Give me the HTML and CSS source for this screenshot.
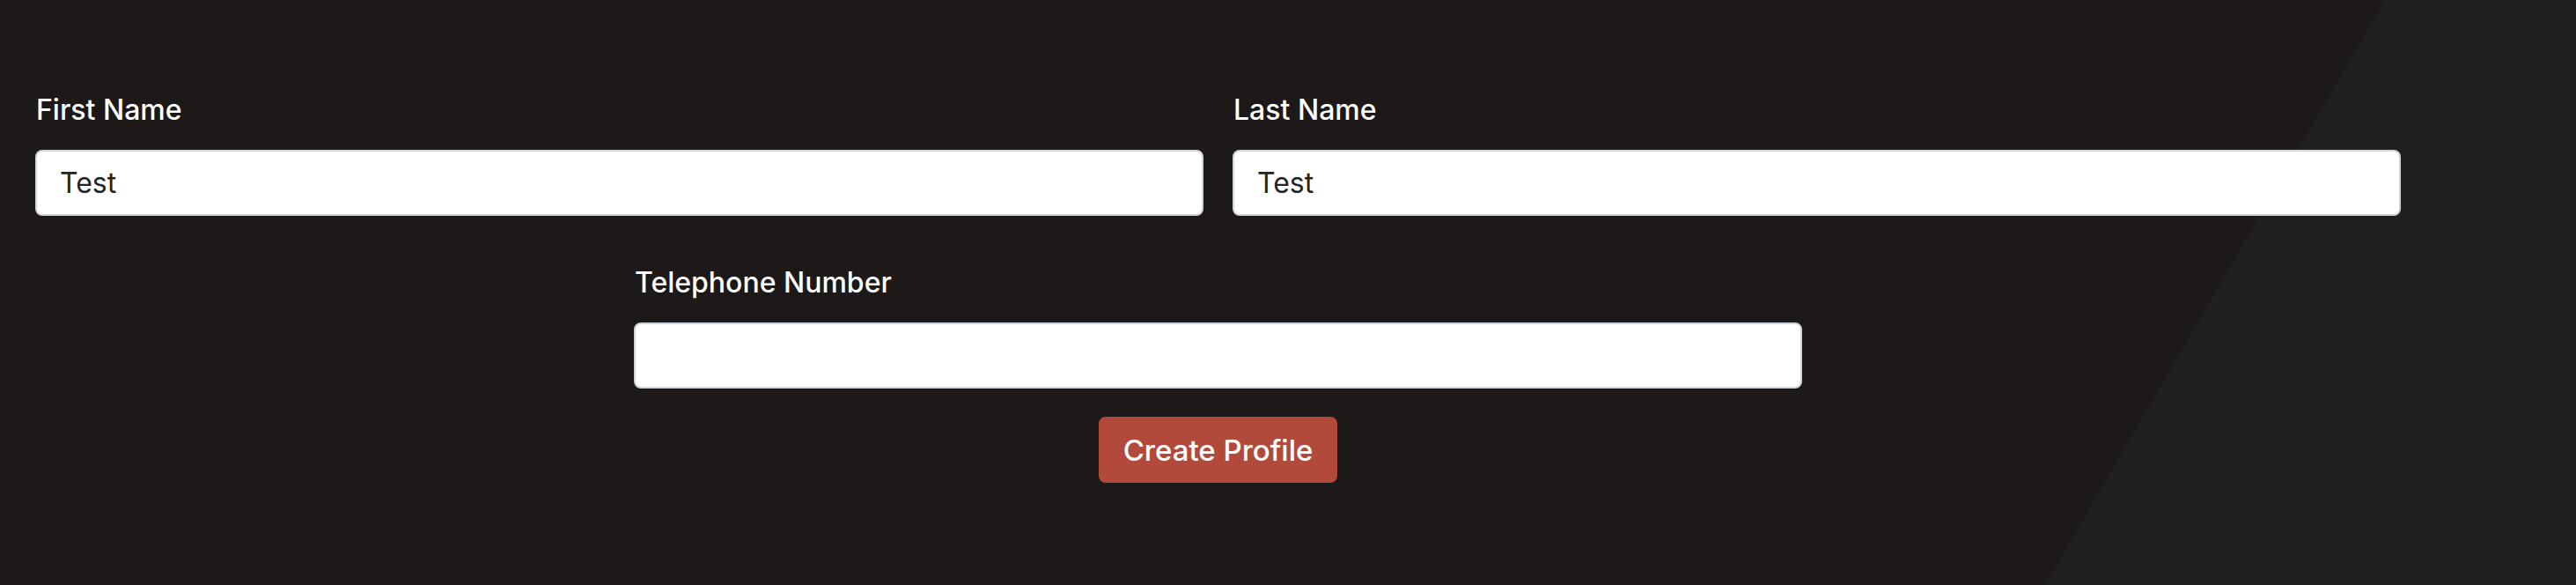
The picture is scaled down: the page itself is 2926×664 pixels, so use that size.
FILE: index.html
```html
<!DOCTYPE html>
<html lang="en">
<head>
<meta charset="utf-8">
<title>Create Profile</title>
<link rel="stylesheet" href="styles.css">
</head>
<body>
<form class="profile-form">
  <div class="row-two">
    <div class="field">
      <label class="field-label" for="first">First Name</label>
      <input class="field-input" id="first" type="text" value="Test">
    </div>
    <div class="field">
      <label class="field-label" for="last">Last Name</label>
      <input class="field-input" id="last" type="text" value="Test">
    </div>
  </div>
  <div class="row-one">
    <div class="field field-center">
      <label class="field-label" for="tel">Telephone Number</label>
      <input class="field-input" id="tel" type="tel" value="">
    </div>
  </div>
  <div class="row-actions">
    <button class="btn-create" type="button">Create Profile</button>
  </div>
</form>
</body>
</html>
```
FILE: styles.css
```css
html {
  background: #1c1918;
}
body {
  margin: 0;
  height: 664px;
  position: relative;
  font-family: Inter, "Noto Sans", sans-serif;
  color: #ffffff;
  overflow: hidden;
}
body::before {
  content: "";
  position: absolute;
  inset: 0;
  background: #202020;
  clip-path: polygon(2709px 0, 100% 0, 100% 100%, 2323px 100%);
  z-index: -1;
}
.profile-form {
  width: 2687px;
  padding: 105px 0 0 40px;
  display: flex;
  flex-direction: column;
}
.row-two {
  display: grid;
  grid-template-columns: 1327px 1327px;
  column-gap: 33px;
}
.row-one {
  display: flex;
  justify-content: center;
  margin-top: 56px;
}
.field {
  display: flex;
  flex-direction: column;
}
.field-center {
  width: 1327px;
}
.field-label {
  font-size: 32px;
  line-height: 40px;
  font-weight: 500;
  margin-bottom: 25px;
  padding-left: 1px;
}
.field-input {
  box-sizing: border-box;
  height: 75px;
  width: 100%;
  border: 2px solid #ced4da;
  border-radius: 8px;
  background: #ffffff;
  padding: 0 26px;
  font-family: Inter, "Noto Sans", sans-serif;
  font-size: 32px;
  color: #212529;
  outline: none;
}
.row-actions {
  display: flex;
  justify-content: center;
  margin-top: 32px;
}
.btn-create {
  box-sizing: border-box;
  height: 75px;
  padding: 0 28px;
  border: none;
  border-radius: 8px;
  background: #b24a3c;
  color: #ffffff;
  font-family: Inter, "Noto Sans", sans-serif;
  font-size: 33px;
  font-weight: 500;
}
```
